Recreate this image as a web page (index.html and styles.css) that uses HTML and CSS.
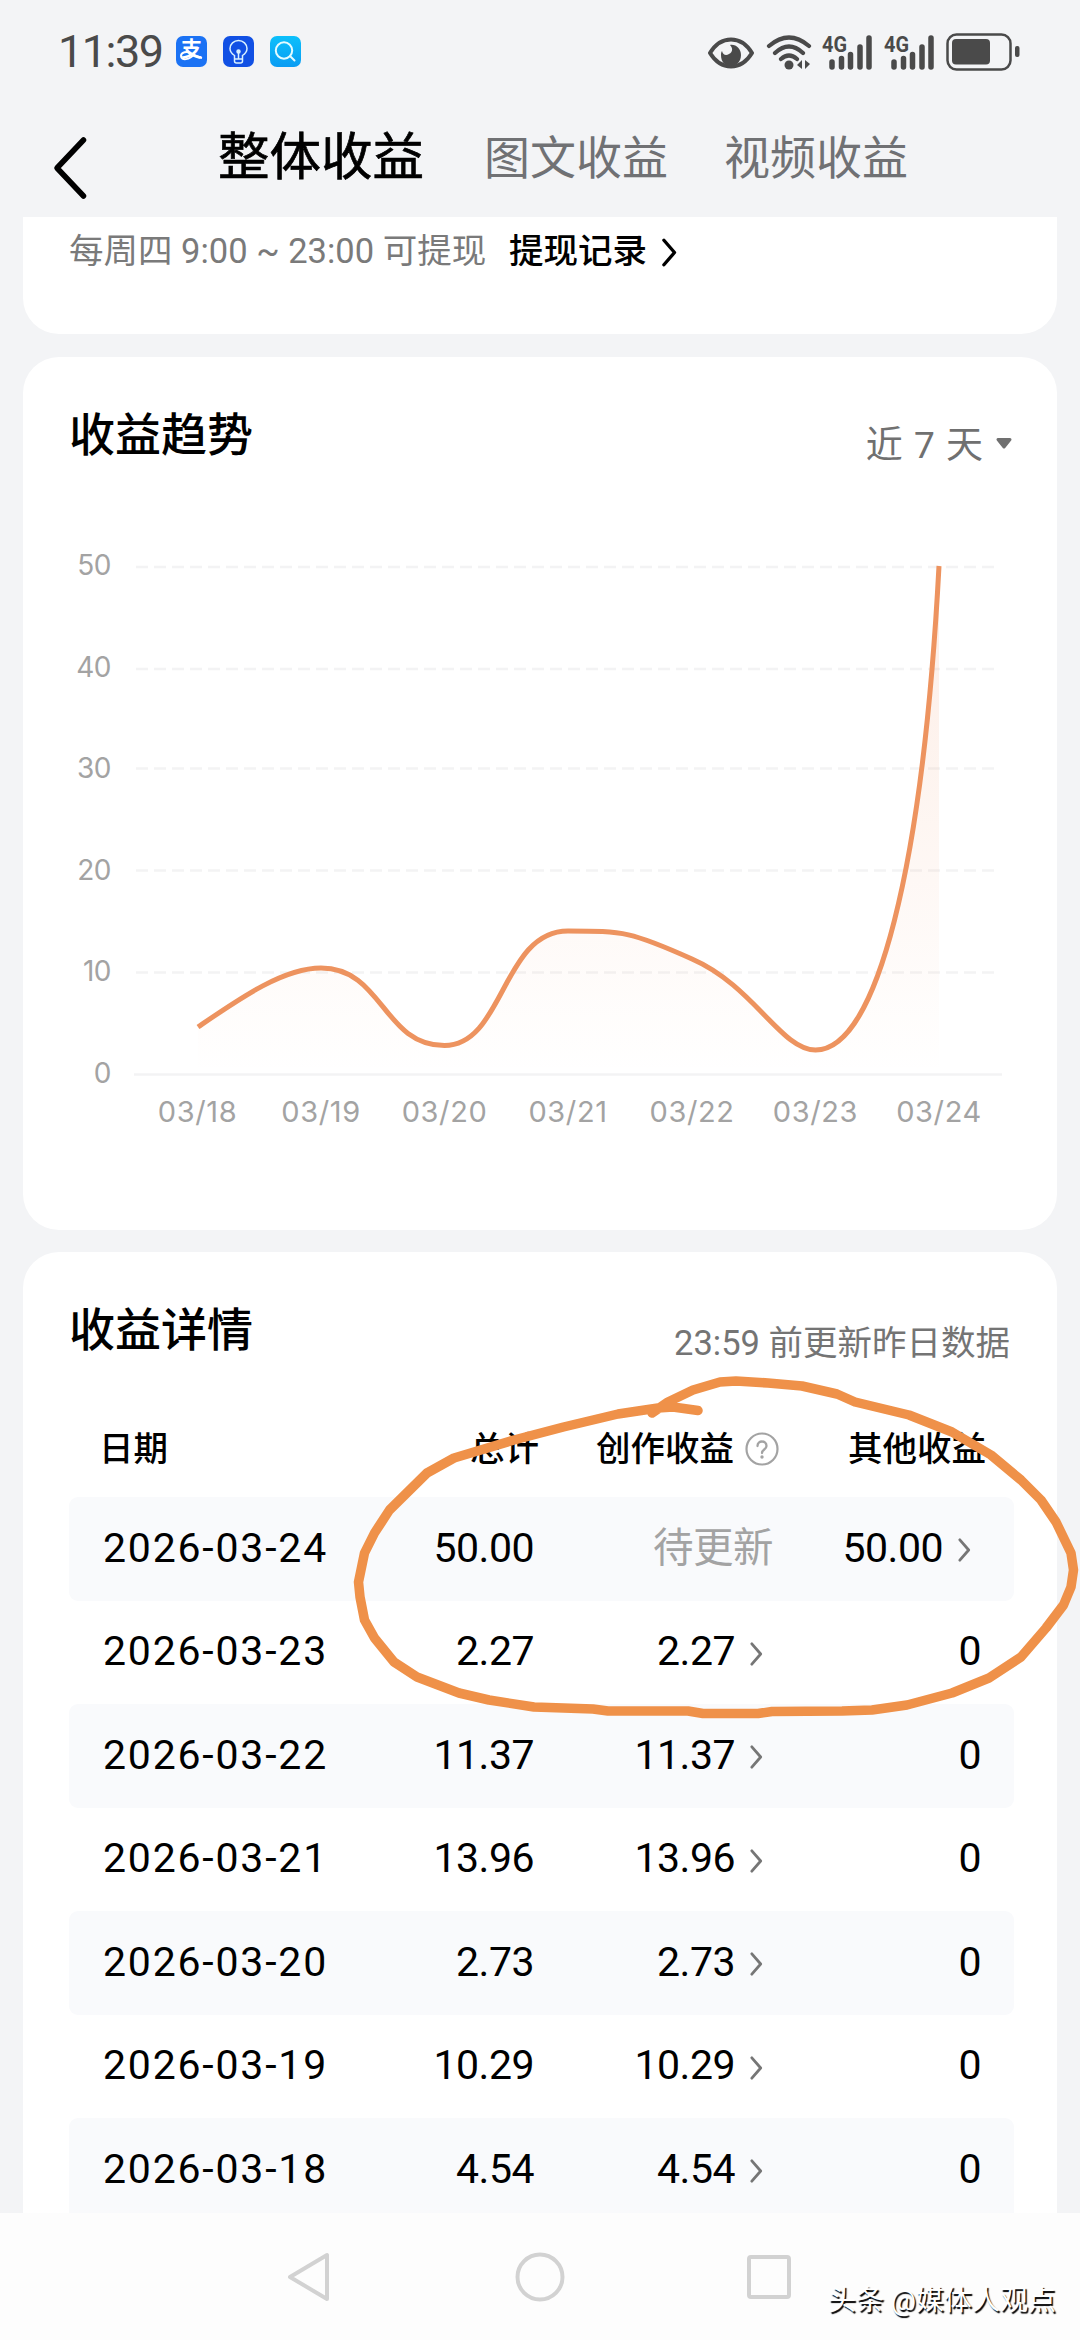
FILE: index.html
```html
<!DOCTYPE html>
<html lang="zh-CN">
<head>
    <meta charset="UTF-8">
    <meta name="viewport" content="width=device-width, initial-scale=1.0">
    <title>整体收益</title>
    <link rel="stylesheet" href="styles.css">
</head>
<body>
    <svg class="defs" width="0" height="0">
        <symbol id="arrow" viewBox="0 0 14 26">
            <path d="M2 2 L11.5 13 L2 24" fill="none" stroke="currentColor" stroke-width="3" stroke-linecap="round" stroke-linejoin="round"/>
        </symbol>
    </svg>
    <div class="screen">
        <div class="status-bar">
            <span class="time">11:39</span>
            <div class="apps">
                <div class="app alipay">
                    <span>支</span>
                    <svg class="swoosh" width="31" height="31" viewBox="0 0 31 31" fill="none" stroke="#fff" stroke-width="2">
                        <path d="M15 17c-4-2-10-1-10 3 0 5 9 4 13-2M14 17c4 2 8 4 12 5"/>
                    </svg>
                </div>
                <div class="app bulb">
                    <svg width="31" height="31" viewBox="0 0 31 31" fill="none" stroke="#d8f0ff" stroke-width="1.500">
                        <path d="M11.500 23v-3.500c-3-2-4.500-4-4.500-7a8.500 8 0 0 1 17 0c0 3-1.500 5-4.500 7V23zM11.500 23v2a2 2 0 0 0 2 2h4a2 2 0 0 0 2-2v-2M15.500 16v7"/>
                        <circle cx="15.500" cy="15.500" r="1.500" fill="#d8f0ff"/>
                    </svg>
                </div>
                <div class="app search">
                    <svg width="31" height="31" viewBox="0 0 31 31" fill="none" stroke="#e4fbff" stroke-width="2" stroke-linecap="round">
                        <circle cx="14" cy="14.500" r="8.200"/>
                        <path d="M20 20l4.500 4.500"/>
                    </svg>
                </div>
            </div>
            <div class="system">
                <svg class="eye" width="46" height="36" viewBox="0 0 46 36">
                    <path d="M2 19C13 1 33 1 44 19 33 37 13 37 2 19z" fill="none" stroke="#4a4a4a" stroke-width="4" stroke-linejoin="round"/>
                    <path d="M22 11c6-1 11 4 11 10 0 7-5 11-10 11-6 0-10-4-10-11 0-1 0-3 1-4 1 4 4 5 7 3 4-2 4-6 1-9z" fill="#4a4a4a"/>
                </svg>
                <svg class="wifi" width="46" height="36" viewBox="0 0 46 36" fill="none" stroke="#4a4a4a" stroke-width="4.200" stroke-linecap="round">
                    <path d="M3 12Q23-5 43 12M9 19Q23 6 37 19M15 25Q23 18 31 25"/>
                    <circle cx="23" cy="31" r="4.500" fill="#4a4a4a" stroke="none"/>
                    <path d="M36 26v9l-5-4zM39 26l5 4-5 5z" fill="#4a4a4a" stroke="none"/>
                </svg>
                <svg class="signal" width="52" height="36" viewBox="0 0 52 36">
                    <text x="0" y="18" textLength="25" lengthAdjust="spacingAndGlyphs">4G</text>
                    <path d="M10 28v5M19.500 24.500v8.500M28.500 20.500v12.500M38 13v20M47 4v29"/>
                </svg>
                <svg class="signal" width="52" height="36" viewBox="0 0 52 36">
                    <text x="0" y="18" textLength="25" lengthAdjust="spacingAndGlyphs">4G</text>
                    <path d="M10 28v5M19.500 24.500v8.500M28.500 20.500v12.500M38 13v20M47 4v29"/>
                </svg>
                <svg class="battery" width="75" height="38" viewBox="0 0 75 38">
                    <rect x="1.500" y="1.500" width="63" height="35" rx="9" fill="none" stroke="#4a4a4a" stroke-width="2.500"/>
                    <rect x="6" y="6" width="38" height="25.500" rx="4" fill="#4a4a4a"/>
                    <rect x="69" y="13" width="4.500" height="11" rx="2" fill="#4a4a4a"/>
                </svg>
            </div>
        </div>

        <div class="tabs">
            <svg class="back" width="36" height="64" viewBox="0 0 36 64">
                <path d="M31.500 4L5 32l26.500 28" fill="none" stroke="#000" stroke-width="5.500" stroke-linecap="round" stroke-linejoin="round"/>
            </svg>
            <span class="tab active">整体收益</span>
            <span class="tab">图文收益</span>
            <span class="tab">视频收益</span>
        </div>

        <div class="content">
            <div class="card withdraw">
                <span class="tip">每周四 9:00 ~ 23:00 可提现</span>
                <span class="record">提现记录</span>
                <svg width="17" height="29"><use href="#arrow"/></svg>
            </div>

            <div class="card trend">
                <div class="card-head">
                    <h2>收益趋势</h2>
                    <div class="range">
                        近 7 天
                        <svg width="18" height="13" viewBox="0 0 18 13"><path d="M3 2.500h12L9 10z" fill="#707070" stroke="#707070" stroke-width="3" stroke-linejoin="round"/></svg>
                    </div>
                </div>
                <svg class="chart" width="944" height="600" viewBox="70 540 944 600">
                    <defs>
                        <linearGradient id="area" x1="0" y1="0" x2="0" y2="1">
                            <stop offset="0" stop-color="#f08c5a" stop-opacity="0.160"/>
                            <stop offset="1" stop-color="#f08c5a" stop-opacity="0"/>
                        </linearGradient>
                    </defs>
                    <g class="grid">
                        <path d="M137 566H995M137 668H995M137 767.500H995M137 869.500H995M137 971.500H995" stroke-dasharray="12 6"/>
                        <path d="M135 1073.500H1003"/>
                    </g>
                    <g class="y-axis">
                        <text x="112" y="574">50</text>
                        <text x="112" y="676">40</text>
                        <text x="112" y="777">30</text>
                        <text x="112" y="879">20</text>
                        <text x="112" y="980">10</text>
                        <text x="112" y="1082">0</text>
                    </g>
                    <g class="x-axis">
                        <text x="198.500" y="1121">03/18</text>
                        <text x="322" y="1121">03/19</text>
                        <text x="445.500" y="1121">03/20</text>
                        <text x="569" y="1121">03/21</text>
                        <text x="693" y="1121">03/22</text>
                        <text x="816.500" y="1121">03/23</text>
                        <text x="940" y="1121">03/24</text>
                    </g>
                    <path fill="url(#area)" d="M199 1026C240 998 284 967 322 967C384 967 384 1044.500 445.500 1044.500C505 1044.500 503 930 569 930C625 930 633 931 693 958C755 985 782 1049 816.500 1049C878 1049 924 866 940 565V1073H199z"/>
                    <path class="line" d="M199 1026C240 998 284 967 322 967C384 967 384 1044.500 445.500 1044.500C505 1044.500 503 930 569 930C625 930 633 931 693 958C755 985 782 1049 816.500 1049C878 1049 924 866 940 565"/>
                </svg>
            </div>

            <div class="card detail">
                <div class="card-head">
                    <h2>收益详情</h2>
                    <div class="note">23:59 前更新昨日数据</div>
                </div>
                <div class="row head">
                    <span class="date">日期</span>
                    <span class="total">总计</span>
                    <span class="create">创作收益
                        <svg width="34" height="34" viewBox="0 0 34 34">
                            <circle cx="17" cy="17" r="15.500" fill="none" stroke="#a3a3a3" stroke-width="2.200"/>
                            <path d="M12.500 14c0-6 9-6 9 0 0 3.500-4.500 3.500-4.500 7" fill="none" stroke="#a3a3a3" stroke-width="2.300" stroke-linecap="round"/>
                            <circle cx="17" cy="25" r="1.700" fill="#a3a3a3"/>
                        </svg>
                    </span>
                    <span class="other">其他收益</span>
                </div>
                <div class="row">
                    <span class="date">2026-03-24</span>
                    <span class="total">50.00</span>
                    <span class="create pending">待更新</span>
                    <span class="other link">50.00<svg width="13" height="26"><use href="#arrow"/></svg></span>
                </div>
                <div class="row">
                    <span class="date">2026-03-23</span>
                    <span class="total">2.27</span>
                    <span class="create link">2.27<svg width="13" height="26"><use href="#arrow"/></svg></span>
                    <span class="other">0</span>
                </div>
                <div class="row">
                    <span class="date">2026-03-22</span>
                    <span class="total">11.37</span>
                    <span class="create link">11.37<svg width="13" height="26"><use href="#arrow"/></svg></span>
                    <span class="other">0</span>
                </div>
                <div class="row">
                    <span class="date">2026-03-21</span>
                    <span class="total">13.96</span>
                    <span class="create link">13.96<svg width="13" height="26"><use href="#arrow"/></svg></span>
                    <span class="other">0</span>
                </div>
                <div class="row">
                    <span class="date">2026-03-20</span>
                    <span class="total">2.73</span>
                    <span class="create link">2.73<svg width="13" height="26"><use href="#arrow"/></svg></span>
                    <span class="other">0</span>
                </div>
                <div class="row">
                    <span class="date">2026-03-19</span>
                    <span class="total">10.29</span>
                    <span class="create link">10.29<svg width="13" height="26"><use href="#arrow"/></svg></span>
                    <span class="other">0</span>
                </div>
                <div class="row">
                    <span class="date">2026-03-18</span>
                    <span class="total">4.54</span>
                    <span class="create link">4.54<svg width="13" height="26"><use href="#arrow"/></svg></span>
                    <span class="other">0</span>
                </div>
            </div>
        </div>

        <div class="nav-bar">
            <svg width="50" height="52" viewBox="0 0 50 52"><path d="M41 4v44L4 26z"/></svg>
            <svg width="50" height="52" viewBox="0 0 50 52"><circle cx="25" cy="26" r="22.500"/></svg>
            <svg width="50" height="52" viewBox="0 0 50 52"><rect x="5" y="6" width="40" height="40" rx="2"/></svg>
        </div>

        <!-- hand-drawn circle over the table -->
        <svg class="marker" width="1080" height="360" viewBox="0 1370 1080 360">
            <path d="M652 1413L668 1402L693 1390L720 1382L736 1381L768 1383L802 1386L837 1394L855 1402L909 1415L952 1432L991 1455L1021 1480L1041 1500L1056 1522L1071 1553L1073.500 1570L1071 1587L1063.500 1605L1046 1628L1021 1657L989 1678L952 1693L907 1705L872 1710L842 1711L772 1711.500L758 1713.500L703 1713.500L688 1711L608 1711L593 1709L534 1707L489 1700L459 1693L417 1677L394 1662L374.500 1638L364.500 1620L360 1597L358.500 1582L364.500 1553L374.500 1533L389.500 1510L427 1473L454 1458L514 1440L563.500 1427L618 1414L658 1408L673 1407L698 1410.500"/>
        </svg>
        <div class="watermark">头条 @媒体人观点</div>
    </div>
</body>
</html>
```
FILE: styles.css
```css
* {
    box-sizing: border-box;
}
body {
    margin: 0;
    font-family: Roboto, "Noto Sans CJK SC", sans-serif;
    color: #000;
}
svg {
    display: block;
    flex-shrink: 0;
}
.defs {
    position: absolute;
}
.screen {
    position: relative;
    display: flex;
    flex-direction: column;
    width: 1080px;
    height: 2340px;
    background: #f3f4f6;
    overflow: hidden;
}

/* status bar */
.status-bar {
    display: flex;
    align-items: center;
    height: 103px;
    padding: 0 60px 0 58px;
    flex-shrink: 0;
}
.time {
    width: 118px;
    font-size: 45px;
    line-height: 60px;
    color: #4a4a4a;
    letter-spacing: -1.5px;
}
.apps {
    display: flex;
    gap: 16px;
}
.app {
    position: relative;
    width: 31px;
    height: 31px;
    border-radius: 7px;
}
.alipay {
    background: #1b72f4;
    color: #fff;
    font-size: 21px;
    font-weight: 700;
    line-height: 27px;
    text-align: center;
}
.swoosh {
    position: absolute;
    top: 0;
    left: 0;
}
.bulb {
    background: #1150e4;
}
.search {
    background: linear-gradient(#0cc0fb, #0a9cf3);
}
.system {
    display: flex;
    align-items: center;
    margin-left: auto;
}
.eye {
    margin-right: 12px;
}
.wifi {
    margin-right: 10px;
}
.signal {
    margin-right: 10px;
    stroke-linecap: round;
}
.signal text {
    font-size: 22px;
    font-weight: 700;
    fill: #4a4a4a;
}
.signal path {
    stroke: #4a4a4a;
    stroke-width: 5.5;
}
.system .battery {
    margin-right: -1px;
}

/* tabs */
.tabs {
    display: flex;
    align-items: center;
    height: 114px;
    padding-left: 52px;
    flex-shrink: 0;
}
.back {
    margin: 15px 130px 0 0;
}
.tab {
    margin: 0 56px 5px 0;
    font-size: 46px;
    line-height: 70px;
    color: #707174;
}
.tab.active {
    margin-right: 60px;
    font-size: 51.5px;
    color: #000;
    -webkit-text-stroke: 0.7px #000;
}

/* cards */
.content {
    display: flex;
    flex-direction: column;
    gap: 22.5px;
    height: 1996px;
    padding: 0 23px;
    overflow: hidden;
    flex-shrink: 0;
}
.card {
    flex-shrink: 0;
    padding: 0 46px;
    background: #fff;
    border-radius: 36px;
}
.withdraw {
    display: flex;
    align-items: flex-start;
    height: 117px;
    padding-top: 9px;
    border-radius: 0 0 36px 36px;
    font-size: 34.5px;
    line-height: 50px;
}
.tip {
    width: 440px;
    color: #7a7a7a;
    white-space: nowrap;
}
.record {
    margin-right: 14px;
    font-weight: 500;
}
.withdraw svg {
    margin-top: 12px;
}
.card-head {
    display: flex;
    justify-content: space-between;
}
h2 {
    margin: 0;
    font-size: 46px;
    font-weight: 500;
    line-height: 60px;
}
.trend {
    height: 873px;
    padding-top: 48px;
}
.range {
    display: flex;
    align-items: center;
    gap: 11px;
    height: 60px;
    margin-top: 7px;
    margin-right: -2px;
    font-size: 37px;
    letter-spacing: 1px;
    color: #707070;
}
.range svg {
    margin-top: 4px;
}
.chart {
    margin-top: 69px;
}
.grid {
    stroke: #f3f3f4;
    stroke-width: 2.5;
}
.chart text {
    font-family: Inter, sans-serif;
    font-size: 29px;
    fill: #a3a3a3;
}
.chart .y-axis text {
    font-size: 28px;
    letter-spacing: -0.5px;
}
.y-axis {
    text-anchor: end;
}
.x-axis {
    text-anchor: middle;
    letter-spacing: 0.6px;
}
.line {
    fill: none;
    stroke: #ed935f;
    stroke-width: 5;
}

/* detail table */
.detail {
    height: 1100px;
    padding: 48px 43px 0 46px;
    border-radius: 36px 36px 0 0;
}
.note {
    height: 60px;
    margin-top: 13px;
    padding-right: 4px;
    font-size: 34.5px;
    line-height: 60px;
    color: #747474;
}
.row {
    display: grid;
    grid-template-columns: 300px 165px 241px 1fr;
    align-items: center;
    height: 103.5px;
    padding-bottom: 2px;
    font-size: 41px;
    line-height: 60px;
    letter-spacing: -0.5px;
    border-radius: 9px;
}
.row:nth-child(odd) {
    background: #f9fafc;
}
.row.head {
    height: 124px;
    padding-bottom: 0;
    padding-top: 28px;
    font-size: 34.5px;
    font-weight: 500;
    letter-spacing: 0;
    background: none;
}
.row span {
    display: flex;
    align-items: center;
    justify-content: flex-end;
    white-space: nowrap;
}
.row .date {
    justify-content: flex-start;
    padding-left: 34px;
    letter-spacing: 1.8px;
}
.row .other {
    padding-right: 33px;
}
.row .link {
    gap: 15px;
    padding-right: 12px;
}
.row .other.link {
    padding-right: 43px;
}
.link svg {
    margin-top: 5px;
    color: #767676;
}
.row .pending {
    padding-right: 2px;
    font-size: 40.5px;
    color: #a3a3a3;
}
.head .create {
    gap: 11px;
}
.row.head .date {
    padding-left: 30px;
    letter-spacing: 0;
}
.head .total {
    margin-right: -5px;
}
.head .create svg {
    margin-right: -4px;
}
.row.head .other {
    padding-right: 28px;
}

/* system navigation */
.nav-bar {
    display: flex;
    justify-content: center;
    gap: 179px;
    height: 127px;
    padding-top: 38px;
    background: #fdfdfd;
}
.nav-bar svg {
    fill: none;
    stroke: #d2d2d2;
    stroke-width: 4;
    stroke-linejoin: round;
}

.marker {
    position: absolute;
    top: 1370px;
    left: 0;
    fill: none;
    stroke: #ef9149;
    stroke-width: 9.5;
    stroke-linecap: round;
    stroke-linejoin: round;
}
.watermark {
    position: absolute;
    right: 24px;
    bottom: 19px;
    font-size: 28px;
    line-height: 40px;
    color: #fff;
    text-shadow: 1.5px 1.5px 1px #000;
}
```
